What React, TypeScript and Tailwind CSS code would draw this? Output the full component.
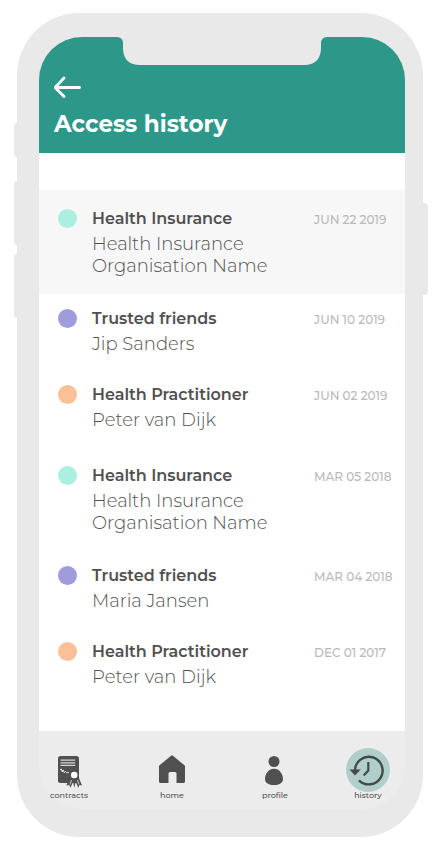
import React from 'react';

type Category = 'insurance' | 'friends' | 'practitioner';

interface HistoryEntry {
  category: Category;
  lines: string[];
  date: string;
  spacing: string;
}

const categories: Record<Category, { label: string; dot: string }> = {
  insurance: { label: 'Health Insurance', dot: 'bg-[#abefe1]' },
  friends: { label: 'Trusted friends', dot: 'bg-[#9e9cdc]' },
  practitioner: { label: 'Health Practitioner', dot: 'bg-[#fbc096]' },
};

const entries: HistoryEntry[] = [
  { category: 'insurance', lines: ['Health Insurance', 'Organisation Name'], date: 'JUN 22 2019', spacing: 'bg-[#f7f7f7] pt-[17px] pb-[17px]' },
  { category: 'friends', lines: ['Jip Sanders'], date: 'JUN 10 2019', spacing: 'pt-[13px] pb-[15px]' },
  { category: 'practitioner', lines: ['Peter van Dijk'], date: 'JUN 02 2019', spacing: 'pt-[13px] pb-5' },
  { category: 'insurance', lines: ['Health Insurance', 'Organisation Name'], date: 'MAR 05 2018', spacing: 'pt-[13px] pb-[17px]' },
  { category: 'friends', lines: ['Maria Jansen'], date: 'MAR 04 2018', spacing: 'pt-[13px] pb-[15px]' },
  { category: 'practitioner', lines: ['Peter van Dijk'], date: 'DEC 01 2017', spacing: 'pt-[13px] pb-[15px]' },
];

const ContractsIcon = () => (
  <svg width="26" height="36" viewBox="0 -3 26 36" fill="none" aria-hidden="true">
    <rect x="2" y="1" width="21" height="27" rx="2.5" fill="#505050" />
    <path d="M4.500 5.200h14.700M4.500 7.800h14.700M4.500 10.400h14.700" stroke="#d4d7d2" strokeWidth="1.3" />
    <path d="M4 15l1.300-1 1 3 .8-2 1.200 2.700 1-1.200 1.300 1.200h2.300" stroke="#ececec" strokeWidth="1" />
    <path d="M14.300 21l-4 9.500 2.900-.5 1.300 2.800 2.600-6 1.200 6 1.400-6 2.600 6 1.200-2.800 2.500.5L22.200 21z" fill="#505050" />
    <path d="M15.500 25l-1.500 4.500M21.500 25l1.500 4.500" stroke="#ececec" strokeWidth=".8" />
    <circle cx="18.200" cy="20" r="3.300" fill="#fff" />
  </svg>
);

const HomeIcon = () => (
  <svg width="26" height="34" viewBox="0 -1 26 34" aria-hidden="true">
    <path
      d="M12.100 1.800a1.300 1.300 0 0 1 1.800 0L25.500 11.300q.5.400.5 1.200v15q0 1.500-1.500 1.500h-7V19.500q0-1.500-1.500-1.500h-5q-1.500 0-1.500 1.500V29h-8Q0 29 0 27.500v-15q0-.8.500-1.200z"
      fill="#505050"
    />
  </svg>
);

const ProfileIcon = () => (
  <svg width="26" height="34" viewBox="0 -1 26 34" fill="#505050" aria-hidden="true">
    <circle cx="12" cy="7.500" r="5.500" />
    <path d="M12 14.800c5.200 0 9 4.900 9 10.400 0 3.900-4 5.800-9 5.800s-9-1.900-9-5.800c0-5.500 3.800-10.400 9-10.400z" />
  </svg>
);

const HistoryIcon = () => (
  <svg width="44" height="44" viewBox="0 0 44 44" fill="none" aria-hidden="true">
    <circle cx="22" cy="22" r="22" fill="#b0cfcb" />
    <path d="M9 22.500A13.800 13.800 0 1 1 13 32.300" stroke="#424b49" strokeWidth="2.400" />
    <path d="M3.500 21.500h11.200L9 27.500z" fill="#424b49" />
    <path d="M22.300 14v8.500l-4.600 5" stroke="#424b49" strokeWidth="2.200" />
  </svg>
);

const tabs = [
  { label: 'contracts', icon: <ContractsIcon /> },
  { label: 'home', icon: <HomeIcon /> },
  { label: 'profile', icon: <ProfileIcon /> },
  { label: 'history', icon: <HistoryIcon />, active: true },
];

const Header = () => (
  <header className="relative rounded-t-[43px] bg-[#2d988a] px-[15px] pt-[39px] pb-[13px]">
    {/* Notch */}
    <svg className="absolute top-0 left-1/2 -translate-x-1/2" width="210" height="28" viewBox="0 0 210 28" aria-hidden="true">
      <path d="M0 0H210Q204 0 204 6.500V12Q203 28 187 28H23Q7 28 6 12V6.500Q6 0 0 0z" fill="#e9e9e9" />
    </svg>
    <button type="button" aria-label="Back" className="block text-white">
      <svg width="28" height="22" viewBox="0 0 28 22" fill="none" stroke="currentColor" strokeWidth="2.800" strokeLinecap="round" strokeLinejoin="round" aria-hidden="true">
        <path d="M10 2L1 11.500 10 20.500M1 11.500H25.500" />
      </svg>
    </button>
    <h1 className="mt-2.5 text-[23px] leading-8 font-bold text-white">Access history</h1>
  </header>
);

const EntryRow = ({ entry }: { entry: HistoryEntry }) => {
  const category = categories[entry.category];
  return (
    <li className={`flex pl-[19px] ${entry.spacing}`}>
      <span className={`mt-0.5 mr-[15px] size-[19px] shrink-0 rounded-full ${category.dot}`} />
      <div className="flex-1">
        <h2 className="text-base leading-6 font-semibold">{category.label}</h2>
        <p className="mt-0.5 text-lg leading-[22px] font-light">
          {entry.lines.map((line) => (
            <span key={line} className="block">{line}</span>
          ))}
        </p>
      </div>
      <time className="w-[91px] shrink-0 pt-px text-xs leading-6 font-medium whitespace-nowrap text-[#bababa]">{entry.date}</time>
    </li>
  );
};

const TabBar = () => (
  <nav className="grid grid-cols-[103fr_103fr_93fr_44px] rounded-b-[43px] bg-[#ececec] pt-[17px] pr-[15px] pb-[11px] pl-2">
    {tabs.map((tab) => (
      <a key={tab.label} href="#" aria-current={tab.active ? 'page' : undefined} className="flex w-11 flex-col items-center">
        <span className="flex h-11 items-center justify-center">{tab.icon}</span>
        <span className="text-[8px] leading-[6px] font-medium">{tab.label}</span>
      </a>
    ))}
  </nav>
);

export default function App() {
  return (
    <div className="min-h-screen bg-white px-[17px] py-[13px] font-['Montserrat','Inter',sans-serif] text-[#505050]">
      <div className="relative mx-auto max-w-md rounded-[62px] bg-[#e9e9e9] pt-6 pr-[18px] pb-7 pl-[22px]">
        {/* Side buttons */}
        <span className="absolute top-[110px] -left-[3px] h-[34px] w-[3px] rounded-l-sm bg-[#e9e9e9]" />
        <span className="absolute top-[168px] -left-[3px] h-16 w-[3px] rounded-l-sm bg-[#e9e9e9]" />
        <span className="absolute top-[241px] -left-[3px] h-16 w-[3px] rounded-l-sm bg-[#e9e9e9]" />
        <span className="absolute top-[190px] -right-[5px] h-[92px] w-[5px] rounded-r bg-[#e9e9e9]" />

        <Header />
        <main className="bg-white pt-[37px] pb-7">
          <ul>
            {entries.map((entry) => (
              <EntryRow key={entry.date} entry={entry} />
            ))}
          </ul>
        </main>
        <TabBar />
      </div>
    </div>
  );
}
